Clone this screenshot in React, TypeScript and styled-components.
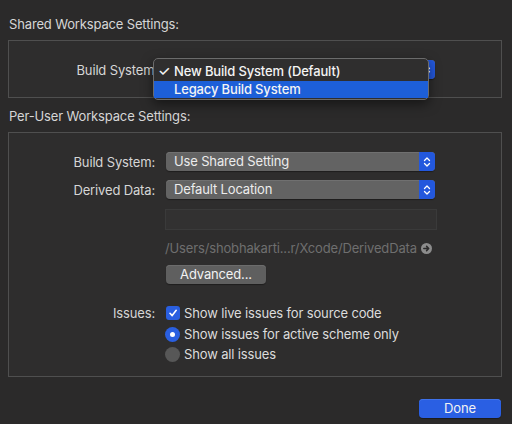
import styled, { createGlobalStyle } from "styled-components";

const GlobalStyle = createGlobalStyle`
    html, body {
        margin: 0;
        padding: 0;
        background: #2b2a2a;
    }
    body {
        font-family: Inter, "Noto Sans", "Liberation Sans", sans-serif;
        font-size: 13px;
        letter-spacing: -0.15px;
        color: #dcdcdc;
        -webkit-font-smoothing: antialiased;
    }
`;

const Page = styled.div`
    width: 512px;
    height: 424px;
    box-sizing: border-box;
    padding: 16px 10px 0 8px;
    display: flex;
    flex-direction: column;
`;

const SectionTitle = styled.div<{ $top?: number }>`
    height: 16px;
    line-height: 16px;
    margin-top: ${props => props.$top ?? 0}px;
    padding-left: 1px;
    color: #d6d6d6;
`;

const Box = styled.div<{ $pad: string }>`
    margin-top: 8px;
    border: 1px solid #4f4f4f;
    background: #2e2d2d;
    padding: ${props => props.$pad};
    display: grid;
    grid-template-columns: 146px 272px;
    column-gap: 11px;
    align-items: center;
`;

const Label = styled.div<{ $top?: number; $nudge?: number }>`
    margin-top: ${props => props.$top ?? 0}px;
    margin-right: ${props => -(props.$nudge ?? 0)}px;
    text-align: right;
    line-height: 16px;
    color: #d6d6d6;
`;

const Cell = styled.div<{ $top?: number }>`
    margin-top: ${props => props.$top ?? 0}px;
    position: relative;
`;

const Popup = styled.div`
    width: 269px;
    height: 19px;
    box-sizing: border-box;
    border-radius: 4px;
    background: #636363;
    box-shadow: inset 0 1px 0 #707070, 0 1px 1px rgba(0, 0, 0, 0.35);
    display: flex;
    align-items: center;
    overflow: hidden;
`;

const PopupText = styled.span`
    flex: 1;
    padding-left: 8px;
    color: #ececec;
    line-height: 19px;
`;

const Stepper = styled.span`
    width: 16px;
    height: 19px;
    background: #2358dd;
    display: flex;
    align-items: center;
    justify-content: center;
`;

const Menu = styled.div`
    position: absolute;
    left: -13px;
    top: -2px;
    width: 276px;
    box-sizing: border-box;
    padding: 2px 0 1px;
    border: 1px solid #6b6b6b;
    border-radius: 5px;
    background: #2f2e2e;
    box-shadow: 0 4px 12px rgba(0, 0, 0, 0.5);
    z-index: 2;
`;

const MenuItem = styled.div<{ $selected?: boolean }>`
    height: ${props => props.$selected ? 17 : 20}px;
    line-height: ${props => props.$selected ? 17 : 20}px;
    padding-left: 20px;
    position: relative;
    font-weight: 500;
    background: ${props => props.$selected ? "#1d5fd8" : "transparent"};
    color: #f4f4f4;
`;

const Check = styled.span`
    position: absolute;
    left: 4px;
    top: 0;
    font-size: 14px;
`;

const Field = styled.div`
    width: 272px;
    height: 21px;
    margin-left: -1px;
    box-sizing: border-box;
    border: 1px solid #3a3a3a;
    background: #323131;
`;

const PathLine = styled.div`
    display: flex;
    align-items: center;
    gap: 4px;
    margin-left: -1px;
    line-height: 16px;
    color: #6f6f6f;
`;

const PushButton = styled.div<{ $primary?: boolean; $width: number }>`
    width: ${props => props.$width}px;
    height: 19px;
    line-height: 19px;
    text-align: center;
    border-radius: 4px;
    color: #f2f2f2;
    background: ${props => props.$primary ? "#2a5fe3" : "#5f5f5f"};
    box-shadow: inset 0 1px 0 ${props => props.$primary ? "#3f72ea" : "#6c6c6c"}, 0 1px 1px rgba(0, 0, 0, 0.35);
`;

const Option = styled.div`
    display: flex;
    align-items: center;
    gap: 4px;
    line-height: 16px;
    color: #dcdcdc;
`;

const CheckBox = styled.span`
    width: 14px;
    height: 14px;
    border-radius: 3px;
    background: #2a5fe0;
    display: flex;
    align-items: center;
    justify-content: center;
`;

const Radio = styled.span<{ $on?: boolean }>`
    width: 15px;
    height: 15px;
    margin-left: -1px;
    border-radius: 50%;
    background: ${props => props.$on ? "#2a5fe0" : "#575757"};
    display: flex;
    align-items: center;
    justify-content: center;
    &::after {
        content: "";
        width: 5px;
        height: 5px;
        border-radius: 50%;
        background: ${props => props.$on ? "#ffffff" : "transparent"};
    }
`;

const Footer = styled.div`
    margin-top: 22px;
    display: flex;
    justify-content: flex-end;
    padding-right: 1px;
`;

const Chevrons = () => (
    <svg width="8" height="12" viewBox="0 0 8 12">
        <path d="M1.5 4.5 L4 2 L6.5 4.5 M1.5 7.5 L4 10 L6.5 7.5" fill="none" stroke="#ffffff" strokeWidth="1.3" strokeLinecap="round" strokeLinejoin="round" />
    </svg>
);

const ArrowCircle = () => (
    <svg width="11" height="11" viewBox="0 0 11 11">
        <circle cx="5.5" cy="5.5" r="5.5" fill="#8c8c8c" />
        <path d="M2.8 5.5 H7.6 M5.6 3.4 L7.7 5.5 L5.6 7.6" fill="none" stroke="#2b2a2a" strokeWidth="1.5" strokeLinecap="round" strokeLinejoin="round" />
    </svg>
);

const Tick = () => (
    <svg width="10" height="10" viewBox="0 0 10 10">
        <path d="M2 5.3 L4.2 7.6 L8.2 2.3" fill="none" stroke="#ffffff" strokeWidth="1.6" strokeLinecap="round" strokeLinejoin="round" />
    </svg>
);

const App = () => {
    return (
        <>
            <GlobalStyle />
            <Page>
                <SectionTitle>Shared Workspace Settings:</SectionTitle>
                <Box $pad="19px 0 18px">
                    {/* the open menu hides the colon */}
                    <Label $nudge={3}>Build System:</Label>
                    <Cell>
                        {/* the popup sits under its open menu, so only its stepper shows */}
                        <Popup>
                            <PopupText />
                            <Stepper><Chevrons /></Stepper>
                        </Popup>
                        <Menu>
                            <MenuItem><Check>✓</Check>New Build System (Default)</MenuItem>
                            <MenuItem $selected>Legacy Build System</MenuItem>
                        </Menu>
                    </Cell>
                </Box>

                <SectionTitle $top={10}>Per-User Workspace Settings:</SectionTitle>
                <Box $pad="19px 0 14px">
                    <Label>Build System:</Label>
                    <Cell>
                        <Popup>
                            <PopupText>Use Shared Setting</PopupText>
                            <Stepper><Chevrons /></Stepper>
                        </Popup>
                    </Cell>

                    <Label $top={9}>Derived Data:</Label>
                    <Cell $top={9}>
                        <Popup>
                            <PopupText>Default Location</PopupText>
                            <Stepper><Chevrons /></Stepper>
                        </Popup>
                    </Cell>

                    <div />
                    <Cell $top={10}><Field /></Cell>

                    <div />
                    <Cell $top={10}>
                        <PathLine>/Users/shobhakarti...r/Xcode/DerivedData <ArrowCircle /></PathLine>
                    </Cell>

                    <div />
                    <Cell $top={9}>
                        <PushButton $width={100}>Advanced...</PushButton>
                    </Cell>

                    <Label $top={21}>Issues:</Label>
                    <Cell $top={21}>
                        <Option><CheckBox><Tick /></CheckBox>Show live issues for source code</Option>
                    </Cell>

                    <div />
                    <Cell $top={5}>
                        <Option><Radio $on />Show issues for active scheme only</Option>
                    </Cell>

                    <div />
                    <Cell $top={4}>
                        <Option><Radio />Show all issues</Option>
                    </Cell>
                </Box>

                <Footer>
                    <PushButton $primary $width={82}>Done</PushButton>
                </Footer>
            </Page>
        </>
    );
};

export default App;
